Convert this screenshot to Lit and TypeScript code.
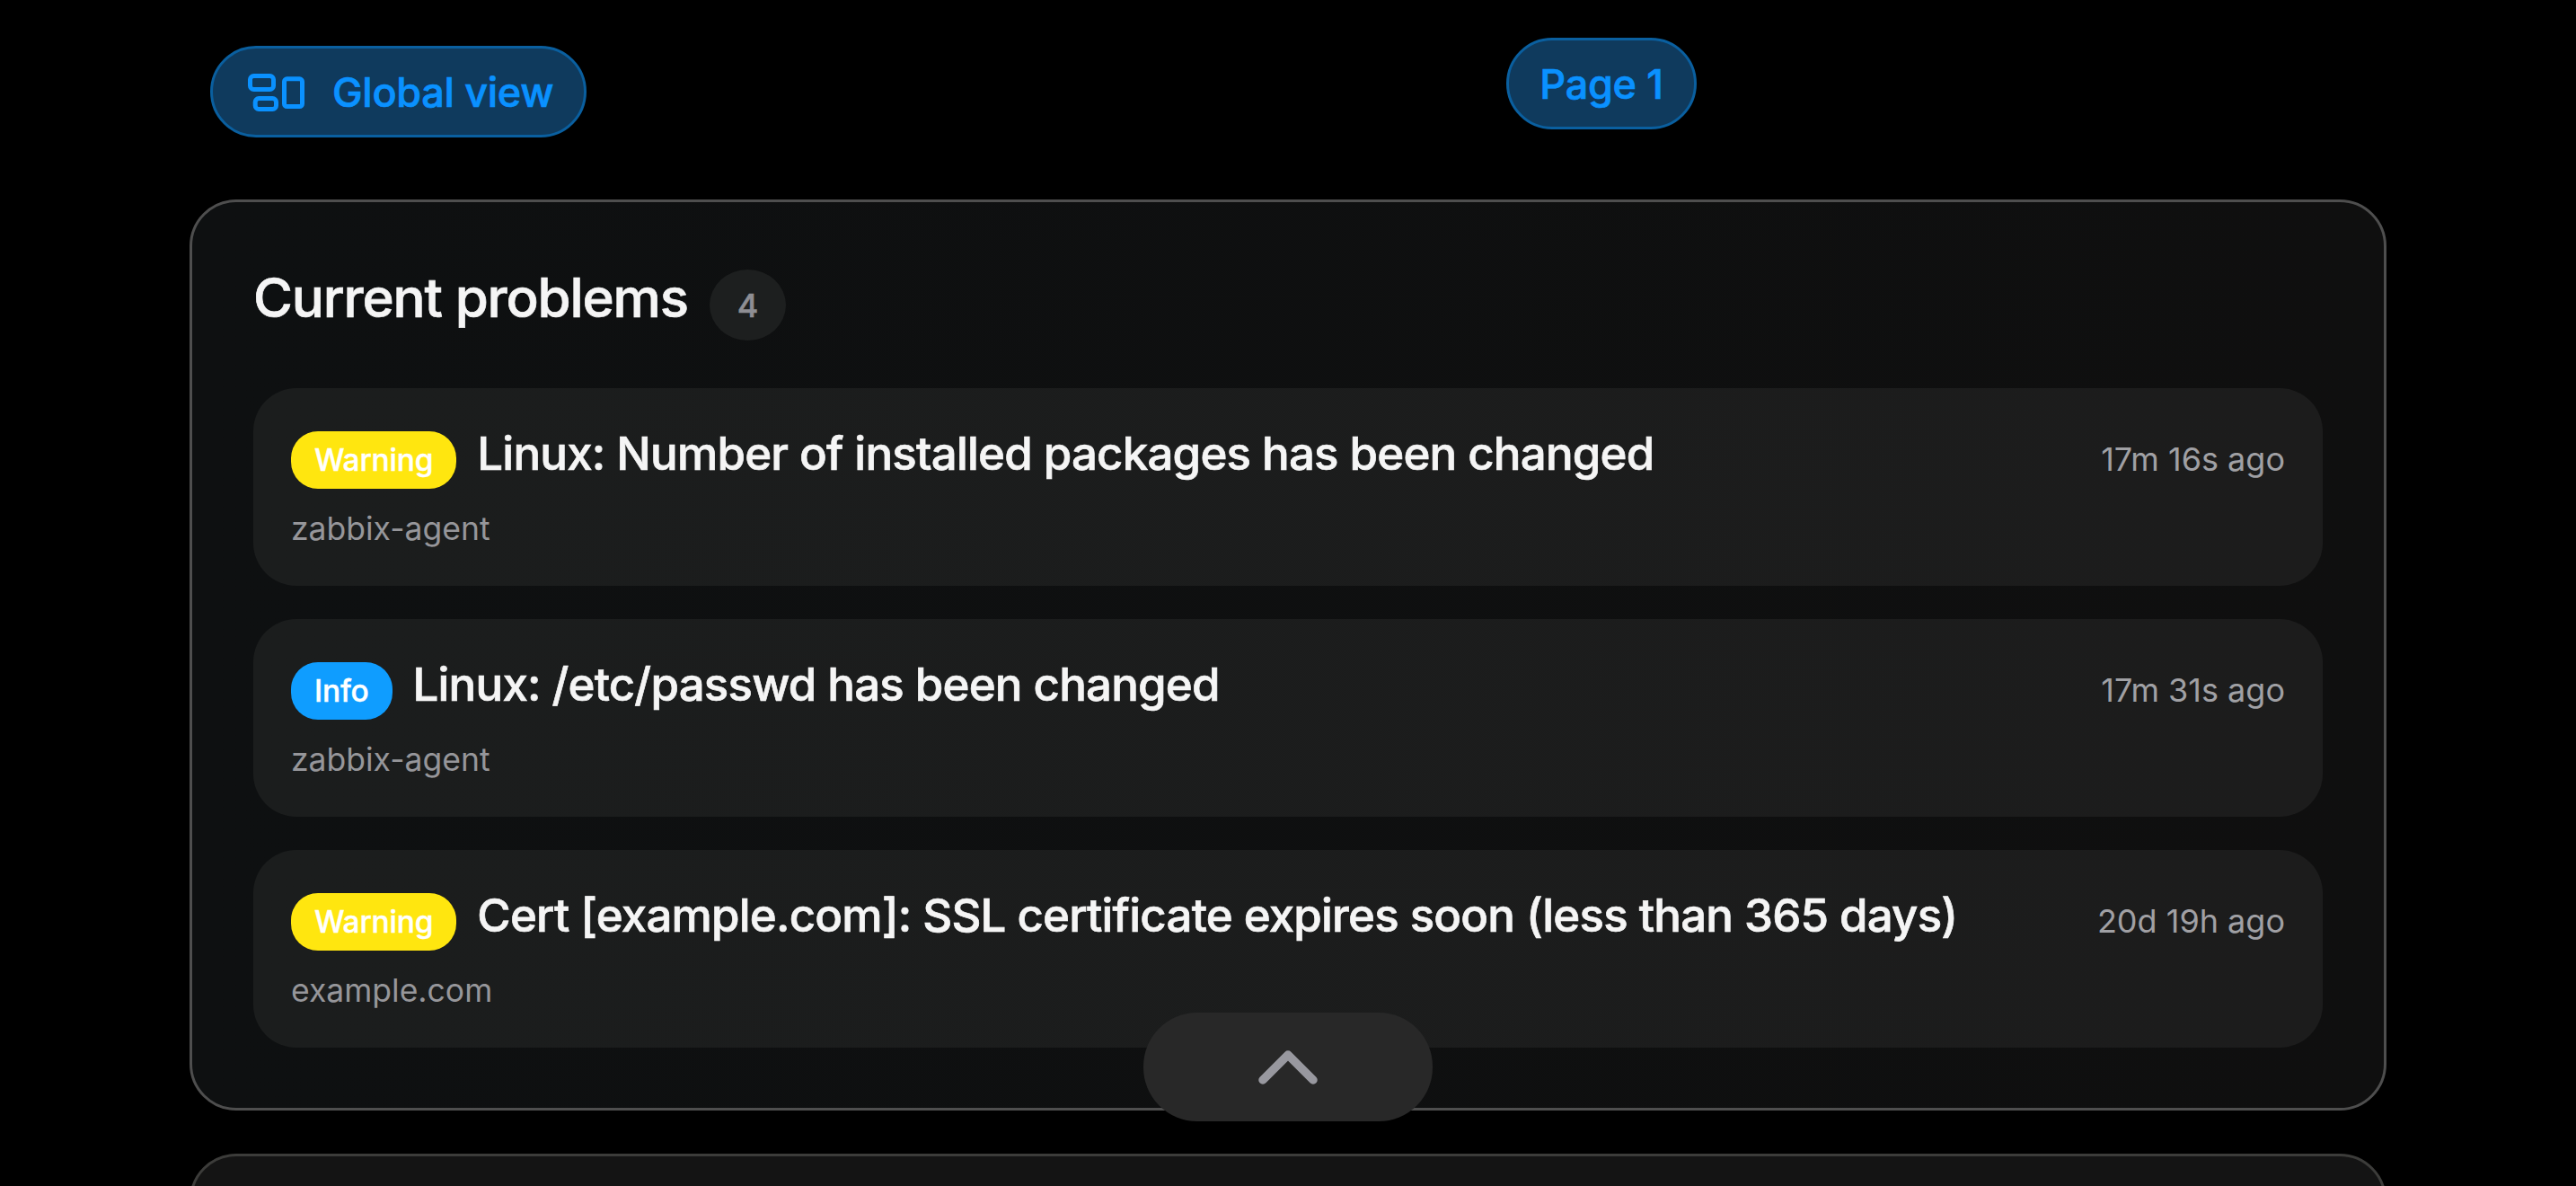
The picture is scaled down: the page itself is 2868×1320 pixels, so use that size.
import { LitElement, html, css, svg } from "lit";
import { customElement } from "lit/decorators.js";

interface Problem { sev: "warning" | "info"; label: string; title: string; host: string; time: string }

const PROBLEMS: Problem[] = [
  { sev: "warning", label: "Warning", title: "Linux: Number of installed packages has been changed", host: "zabbix-agent", time: "17m 16s ago" },
  { sev: "info", label: "Info", title: "Linux: /etc/passwd has been changed", host: "zabbix-agent", time: "17m 31s ago" },
  { sev: "warning", label: "Warning", title: "Cert [example.com]: SSL certificate expires soon (less than 365 days)", host: "example.com", time: "20d 19h ago" },
];

@customElement("app-root")
export class AppRoot extends LitElement {
  static styles = css`
    :host {
      display: block;
      position: relative;
      width: 2868px;
      height: 1320px;
      overflow: hidden;
      background: #000;
      font-family: Inter, "Liberation Sans", sans-serif;
      color: #f5f5f5;
    }
    .tabs {
      display: flex;
      align-items: flex-start;
      height: 222px;
      box-sizing: border-box;
      padding: 42px 0 0 234px;
      gap: 1024px;
    }
    .tab {
      display: flex;
      align-items: center;
      box-sizing: border-box;
      height: 102px;
      border-radius: 51px;
      border: 3px solid #0a5f9f;
      background: #0f3a5d;
      color: #0a91ff;
      font-size: 45px;
      font-weight: 500;
      letter-spacing: -0.3px;
      -webkit-text-stroke: 0.7px #0a91ff;
    }
    .tab.global { margin-top: 9px; padding: 0 0 0 39px; gap: 31px; width: 419px; }
    .tab.page { width: 212px; justify-content: center; }
    .tab svg { flex: none; display: block; margin-top: 2px; }
    .card {
      box-sizing: border-box;
      margin: 0 211px;
      height: 1014px;
      border: 3px solid #4e4e4e;
      border-radius: 52px;
      padding: 0 68px;
      background: linear-gradient(90deg, #0e1011, #0f0f0f);
    }
    .head {
      display: flex;
      align-items: center;
      height: 207px;
      padding-top: 22px;
      box-sizing: border-box;
      gap: 24px;
    }
    .head h2 {
      margin: 0;
      font-size: 60px;
      font-weight: 500;
      letter-spacing: -1.15px;
      line-height: 72px;
      margin-top: -18px;
      -webkit-text-stroke: 0.7px #f5f5f5;
    }
    .count {
      width: 85px;
      height: 79px;
      border-radius: 50%;
      background: #1d1f1f;
      color: #8e8e93;
      font-size: 36px;
      font-weight: 500;
      -webkit-text-stroke: 0.5px #8e8e93;
      display: flex;
      align-items: center;
      justify-content: center;
    }
    .list { display: flex; flex-direction: column; gap: 37px; }
    .item {
      box-sizing: border-box;
      height: 220px;
      border-radius: 48px;
      background: linear-gradient(90deg, #1b1d1d, #1c1c1c);
      padding: 48px 42px 0;
    }
    .line { display: flex; align-items: flex-start; gap: 23px; height: 64px; }
    .badge {
      flex: none;
      height: 64px;
      box-sizing: border-box;
      border-radius: 30px;
      padding: 0 26px;
      display: flex;
      align-items: center;
      justify-content: center;
      color: #fff;
      font-size: 33.5px;
      font-weight: 500;
      letter-spacing: -0.2px;
      -webkit-text-stroke: 0.4px #fff;
    }
    .badge.warning { background: #ffe60f; }
    .badge.info { background: #0f9dff; }
    .title {
      flex: 1;
      font-size: 51px;
      font-weight: 500;
      line-height: 60px;
      letter-spacing: -0.8px;
      white-space: nowrap;
      margin-top: -5px;
      -webkit-text-stroke: 0.7px #f5f5f5;
    }
    .time {
      flex: none;
      font-size: 36px;
      line-height: 42px;
      margin-top: 10px;
      color: #a0a0a4;
    }
    .host {
      margin-top: 24px;
      font-size: 35.5px;
      line-height: 42px;
      color: #96969a;
    }
    .up {
      position: absolute;
      left: 1273px;
      top: 1127px;
      width: 322px;
      height: 121px;
      border-radius: 60px;
      background: #282828;
      display: flex;
      align-items: center;
      justify-content: center;
    }
    .next {
      box-sizing: border-box;
      margin: 48px 211px 0;
      height: 200px;
      border: 3px solid #3c3c3a;
      border-radius: 52px;
      background: #141414;
    }
  `;

  private layoutIcon() {
    return svg`<svg width="63" height="42" viewBox="0 0 63 42" fill="none" stroke="currentColor" stroke-width="5">
      <rect x="2.500" y="2.500" width="26" height="15" rx="4"/>
      <rect x="8.200" y="27.500" width="23.300" height="12" rx="4"/>
      <rect x="40.500" y="5.800" width="20" height="30.700" rx="3"/>
    </svg>`;
  }

  render() {
    return html`
      <div class="tabs">
        <div class="tab global">${this.layoutIcon()}<span>Global view</span></div>
        <div class="tab page"><span>Page 1</span></div>
      </div>
      <section class="card">
        <div class="head"><h2>Current problems</h2><div class="count">4</div></div>
        <div class="list">
          ${PROBLEMS.map(p => html`
            <div class="item">
              <div class="line">
                <span class="badge ${p.sev}">${p.label}</span>
                <span class="title">${p.title}</span>
                <span class="time">${p.time}</span>
              </div>
              <div class="host">${p.host}</div>
            </div>`)}
        </div>
      </section>
      <div class="next"></div>
      <div class="up">
        <svg width="72" height="46" viewBox="0 0 72 46" fill="none" stroke="#98989f" stroke-width="9.500" stroke-linecap="round" stroke-linejoin="round"><path d="M8 37 L36 9 L64 37"/></svg>
      </div>
    `;
  }
}
